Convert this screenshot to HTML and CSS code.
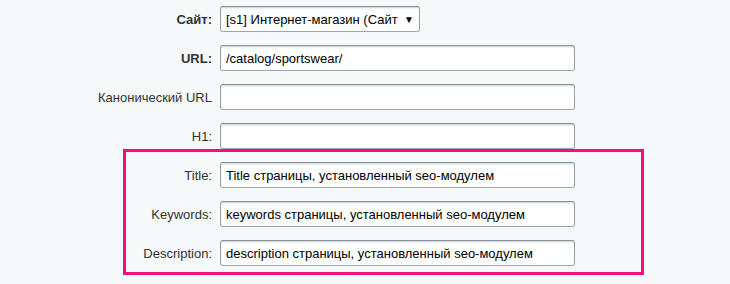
FILE: index.html
```html
<!DOCTYPE html>
<html>
<head>
    <title>SEO</title>
    <link rel="stylesheet" href="styles.css">
</head>
<body>
    <form class="edit-form">
        <div class="row">
            <label class="label bold">Сайт:</label>
            <div class="select">
                <span class="select-text">[s1] Интернет-магазин (Сайт по умолчанию)</span>
                <span class="select-arrow">▼</span>
            </div>
        </div>
        <div class="row">
            <label class="label bold">URL:</label>
            <input class="field" type="text" value="/catalog/sportswear/">
        </div>
        <div class="row">
            <label class="label">Канонический URL</label>
            <input class="field" type="text" value="">
        </div>
        <div class="row">
            <label class="label">H1:</label>
            <input class="field" type="text" value="">
        </div>

        <div class="highlight">
            <div class="row">
                <label class="label">Title:</label>
                <input class="field" type="text" value="Title страницы, установленный seo-модулем">
            </div>
            <div class="row">
                <label class="label">Keywords:</label>
                <input class="field" type="text" value="keywords страницы, установленный seo-модулем">
            </div>
            <div class="row">
                <label class="label">Description:</label>
                <input class="field" type="text" value="description страницы, установленный seo-модулем">
            </div>
        </div>
    </form>
</body>
</html>
```

FILE: styles.css
```css
body {
    margin: 0;
    background: #f5f9f9;
    font-family: Arial, "Liberation Sans", sans-serif;
    font-size: 13px;
    color: #333;
}

.edit-form {
    padding-top: 6px;
}

.row {
    display: flex;
    align-items: center;
    height: 26px;
}

.row + .row {
    margin-top: 13px;
}

.label {
    width: 212px;
    flex-shrink: 0;
    text-align: right;
    margin-right: 8px;
    color: #333;
}

.bold {
    font-weight: bold;
}

.field,
.select {
    box-sizing: border-box;
    height: 26px;
    border: 1px solid;
    border-color: #87919c #959ea9 #9ea7b1 #959ea9;
    border-radius: 3px;
    background: #fff;
    box-shadow: inset 0 2px 2px -1px rgba(180, 188, 191, 0.7);
    font-family: inherit;
    font-size: 13px;
    color: #000;
}

.field {
    width: 355px;
    padding: 0 5px;
    margin: 0;
    outline: none;
}

.select {
    width: 200px;
    display: flex;
    align-items: center;
    padding: 0 5px;
}

.select-text {
    flex: 1;
    overflow: hidden;
    white-space: nowrap;
}

.select-arrow {
    font-size: 10px;
    margin-left: 6px;
    color: #000;
}

/* red frame around the seo fields */
.highlight {
    margin-left: 123px;
    width: 521px;
    box-sizing: border-box;
    border: 3px solid #fe0a7f;
    padding: 10px 0 6px;
}

.highlight .label {
    width: 86px;
}
```
